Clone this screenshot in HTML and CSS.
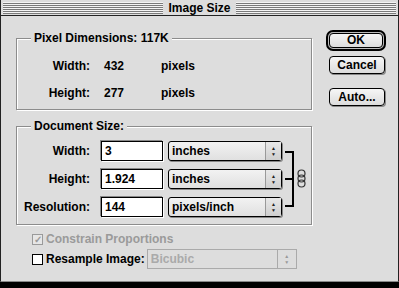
FILE: index.html
```html
<!DOCTYPE html>
<html lang="en">
<head>
    <meta charset="UTF-8">
    <title>Image Size</title>
    <link rel="stylesheet" href="styles.css">
</head>
<body>
    <div class="window">
        <div class="titlebar">
            <div class="stripes"><span class="title">Image Size</span></div>
        </div>
        <div class="content">
            <div class="main">
                <div class="group pixel-group">
                    <span class="group-title">Pixel Dimensions: 117K</span>
                    <div class="pixel-grid">
                        <span class="label">Width:</span>
                        <span class="value">432</span>
                        <span class="unit">pixels</span>
                        <span class="label">Height:</span>
                        <span class="value">277</span>
                        <span class="unit">pixels</span>
                    </div>
                </div>
                <div class="group doc-group">
                    <span class="group-title">Document Size:</span>
                    <div class="doc-grid">
                        <span class="label">Width:</span>
                        <span class="field">3</span>
                        <span class="popup"><span class="popup-text">inches</span><span class="arrows">&#9650;<br>&#9660;</span></span>
                        <svg class="bracket" width="14" height="84" viewBox="0 0 14 84">
                            <path d="M3 15 H11 V69 H3 M3 42 H11" fill="none" stroke="#000" stroke-width="2"/>
                        </svg>
                        <svg class="chain" width="11" height="84" viewBox="0 0 11 84">
                            <g fill="none" stroke="#333" stroke-width="1.2">
                                <rect x="2" y="33" width="7" height="7" rx="3.5"/>
                                <rect x="2" y="38" width="7" height="7" rx="3.5"/>
                                <rect x="2" y="43" width="7" height="7" rx="3.5"/>
                            </g>
                        </svg>
                        <span class="label">Height:</span>
                        <span class="field">1.924</span>
                        <span class="popup"><span class="popup-text">inches</span><span class="arrows">&#9650;<br>&#9660;</span></span>
                        <span class="label">Resolution:</span>
                        <span class="field">144</span>
                        <span class="popup"><span class="popup-text">pixels/inch</span><span class="arrows">&#9650;<br>&#9660;</span></span>
                    </div>
                </div>
                <div class="check-row disabled">
                    <span class="checkbox">&#10003;</span>
                    <span>Constrain Proportions</span>
                </div>
                <div class="check-row">
                    <span class="checkbox"></span>
                    <span>Resample Image:</span>
                    <span class="popup popup-disabled"><span class="popup-text">Bicubic</span><span class="arrows">&#9650;<br>&#9660;</span></span>
                </div>
            </div>
            <div class="side">
                <div class="default-ring"><button class="btn">OK</button></div>
                <button class="btn cancel">Cancel</button>
                <button class="btn auto">Auto...</button>
            </div>
        </div>
    </div>
</body>
</html>
```

FILE: styles.css
```css
body {
    margin: 0;
    background-color: #000;
    font-family: "Liberation Sans", Arial, sans-serif;
    font-size: 12px;
    font-weight: bold;
    color: #000;
}
.window {
    width: 397px;
    height: 281px;
    background-color: #dddddd;
    border-left: 1px solid #222;
    border-right: 1px solid #222;
    border-bottom: 1px solid #888;
}
.titlebar {
    height: 16px;
    border-bottom: 1px solid #222;
    padding: 2px 2px 0;
    box-sizing: border-box;
    background-color: #dddddd;
}
.stripes {
    height: 12px;
    background: repeating-linear-gradient(to bottom, #f4f4f4 0, #f4f4f4 1px, #7a7a7a 1px, #7a7a7a 2px);
    text-align: center;
    line-height: 12px;
}
.title {
    background-color: #dddddd;
    padding: 0 5px;
    font-size: 12px;
}
.content {
    display: flex;
    padding: 14px 0 0 15px;
}
.main {
    width: 296px;
    margin-top: 8px;
}
.group {
    position: relative;
    border: 1px solid #8c8c8c;
    box-shadow: 1px 1px 0 #fff, inset 1px 1px 0 #fff;
}
.group-title {
    position: absolute;
    top: -8px;
    left: 14px;
    padding: 0 3px;
    background-color: #dddddd;
    line-height: 14px;
}
.pixel-group {
    padding-top: 13px;
    height: 57px;
}
.pixel-grid {
    display: grid;
    grid-template-columns: 73px 71px auto;
    grid-auto-rows: 27px;
    align-items: center;
}
.label {
    text-align: right;
}
.pixel-grid .value {
    padding-left: 14px;
}
.doc-group {
    margin-top: 16px;
    padding: 10px 0 3px;
}
.doc-grid {
    display: grid;
    grid-template-columns: 73px 74px 118px 14px 11px;
    grid-auto-rows: 28px;
    align-items: center;
}
.field {
    margin-left: 11px;
    width: 62px;
    height: 20px;
    box-sizing: border-box;
    background-color: #fff;
    border: 1px solid #000;
    box-shadow: -1px -1px 0 #888, 1px 1px 0 #fff;
    padding-left: 3px;
    line-height: 18px;
}
.popup {
    display: flex;
    margin-left: 4px;
    height: 20px;
    box-sizing: border-box;
    border: 1px solid #000;
    border-radius: 3px;
    background: linear-gradient(#f2f2f2, #e0e0e0);
    box-shadow: 1px 1px 0 #888;
}
.popup-text {
    flex: 1;
    padding-left: 3px;
    line-height: 18px;
}
.arrows {
    width: 16px;
    border-left: 1px solid #999;
    background: linear-gradient(#e8e8e8, #cfcfcf);
    font-size: 5px;
    line-height: 6px;
    text-align: center;
    padding-top: 3px;
    box-sizing: border-box;
    color: #222;
}
.bracket {
    grid-column: 4;
    grid-row: 1 / 4;
}
.chain {
    grid-column: 5;
    grid-row: 1 / 4;
}
.check-row {
    display: flex;
    align-items: center;
    height: 20px;
    padding-left: 16px;
}
.doc-group + .check-row {
    margin-top: 4px;
}
.checkbox {
    width: 11px;
    height: 11px;
    box-sizing: border-box;
    border: 1px solid #000;
    background-color: #fff;
    margin-right: 3px;
    font-size: 10px;
    line-height: 9px;
    text-align: center;
}
.disabled {
    color: #9a9a9a;
}
.disabled .checkbox {
    border-color: #9a9a9a;
    background-color: #e6e6e6;
}
.popup-disabled {
    margin-left: 2px;
    width: 150px;
    border-color: #aaa;
    border-radius: 0;
    background: #dddddd;
    box-shadow: none;
    color: #aaa;
}
.popup-disabled .arrows {
    background: #dddddd;
    border-left-color: #aaa;
    color: #999;
    width: 19px;
}
.side {
    margin-left: 14px;
    display: flex;
    flex-direction: column;
    align-items: flex-start;
}
.btn {
    font-family: "Liberation Sans", Arial, sans-serif;
    font-size: 12px;
    font-weight: bold;
    width: 56px;
    height: 18px;
    padding: 0;
    background: linear-gradient(#f6f6f6, #dcdcdc);
    border: 1px solid #000;
    border-radius: 4px;
    box-shadow: 1px 1px 0 #888;
    color: #000;
}
.default-ring {
    width: 60px;
    height: 21px;
    box-sizing: border-box;
    border: 2px solid #000;
    border-radius: 7px;
    display: flex;
    align-items: center;
    justify-content: center;
    background-color: #bbb;
}
.default-ring .btn {
    width: 54px;
    height: 15px;
    line-height: 13px;
    box-shadow: none;
}
.cancel {
    margin: 5px 0 0 3px;
}
.auto {
    margin: 14px 0 0 3px;
}
```
